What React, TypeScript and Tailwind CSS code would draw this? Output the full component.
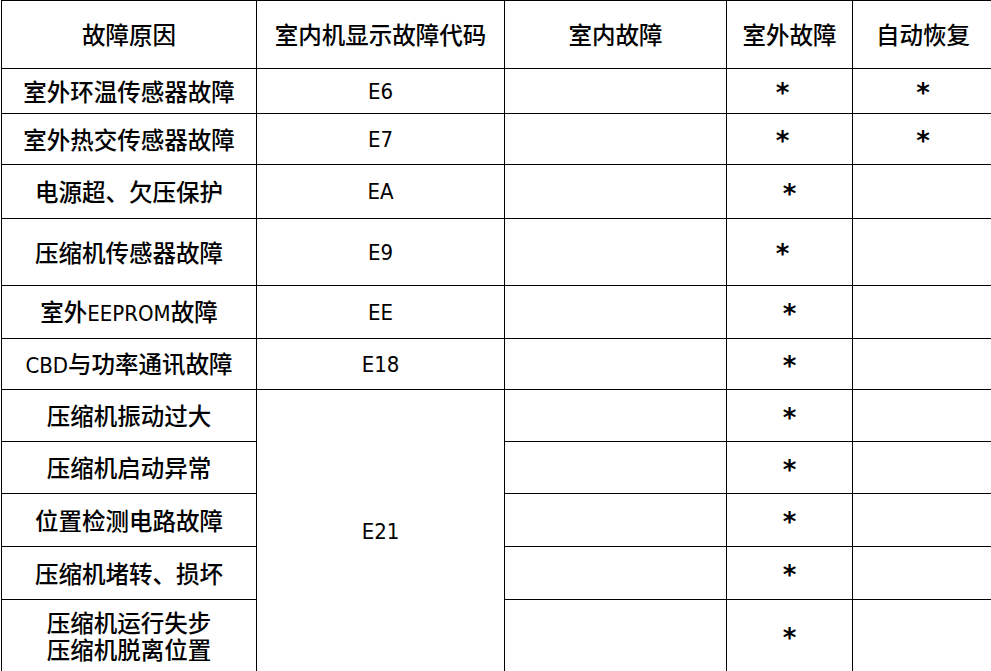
const cjk = '"Noto Sans CJK SC", "Liberation Sans", sans-serif';
const narrow =
  '"Liberation Sans Narrow", "DejaVu Sans Condensed", "DejaVu Sans Mono", "Noto Sans CJK SC", sans-serif';
const mono = '"DejaVu Sans Mono", monospace';

type Row = {
  cause: React.ReactNode;
  code?: string;
  outdoor: "left" | "center";
  auto?: boolean;
};

// latin runs in the reference are narrow glyphs
const Latin = ({ children }: { children: string }) => (
  <span className="text-[22px]" style={{ fontFamily: narrow }}>
    {children}
  </span>
);

const rows: Row[] = [
  { cause: "室外环温传感器故障", code: "E6", outdoor: "left", auto: true },
  { cause: "室外热交传感器故障", code: "E7", outdoor: "left", auto: true },
  { cause: "电源超、欠压保护", code: "EA", outdoor: "center" },
  { cause: "压缩机传感器故障", code: "E9", outdoor: "left" },
  {
    cause: (
      <>
        室外<Latin>EEPROM</Latin>故障
      </>
    ),
    code: "EE",
    outdoor: "center",
  },
  {
    cause: (
      <>
        <Latin>CBD</Latin>与功率通讯故障
      </>
    ),
    code: "E18",
    outdoor: "center",
  },
  { cause: "压缩机振动过大", code: "E21", outdoor: "center" },
  { cause: "压缩机启动异常", outdoor: "center" },
  { cause: "位置检测电路故障", outdoor: "center" },
  { cause: "压缩机堵转、损坏", outdoor: "center" },
  {
    cause: (
      <>
        压缩机运行失步
        <br />
        压缩机脱离位置
      </>
    ),
    outdoor: "center",
  },
];

const cell = "bg-white flex items-center justify-center text-center";

const Star = ({ shift }: { shift?: boolean }) => (
  <span
    className={
      shift
        ? "mr-[14px] text-[26px] leading-none translate-y-[2px] font-bold"
        : "text-[26px] leading-none translate-y-[2px] font-bold"
    }
    style={{ fontFamily: mono }}
  >
    *
  </span>
);

export default function App() {
  return (
    <div
      className="w-[991px] h-[671px] overflow-hidden bg-white text-black"
      style={{ fontFamily: cjk }}
    >
      <div className="ml-[1px] w-max bg-black p-px">
        <div className="grid grid-cols-[254px_247px_221px_125px_140px] grid-rows-[67px_44px_50px_53px_66px_52px_50px_51px_51px_52px_52px_72px] gap-px text-[23.5px] font-medium">
          <div className={cell}>故障原因</div>
          <div className={cell}>室内机显示故障代码</div>
          <div className={cell}>室内故障</div>
          <div className={cell}>室外故障</div>
          <div className={cell}>自动恢复</div>
          {rows.map((r, i) => (
            <div key={i} className="contents">
              <div className={`${cell} leading-[27px]`}>
                <p>{r.cause}</p>
              </div>
              {r.code && (
                <div
                  className={
                    r.code === "E21"
                      ? `${cell} row-span-5 text-[22px]`
                      : `${cell} text-[22px]`
                  }
                  style={{ fontFamily: narrow }}
                >
                  {r.code}
                </div>
              )}
              <div className={cell}></div>
              <div className={cell}>
                <Star shift={r.outdoor === "left"} />
              </div>
              <div className={cell}>{r.auto && <Star />}</div>
            </div>
          ))}
        </div>
      </div>
    </div>
  );
}
